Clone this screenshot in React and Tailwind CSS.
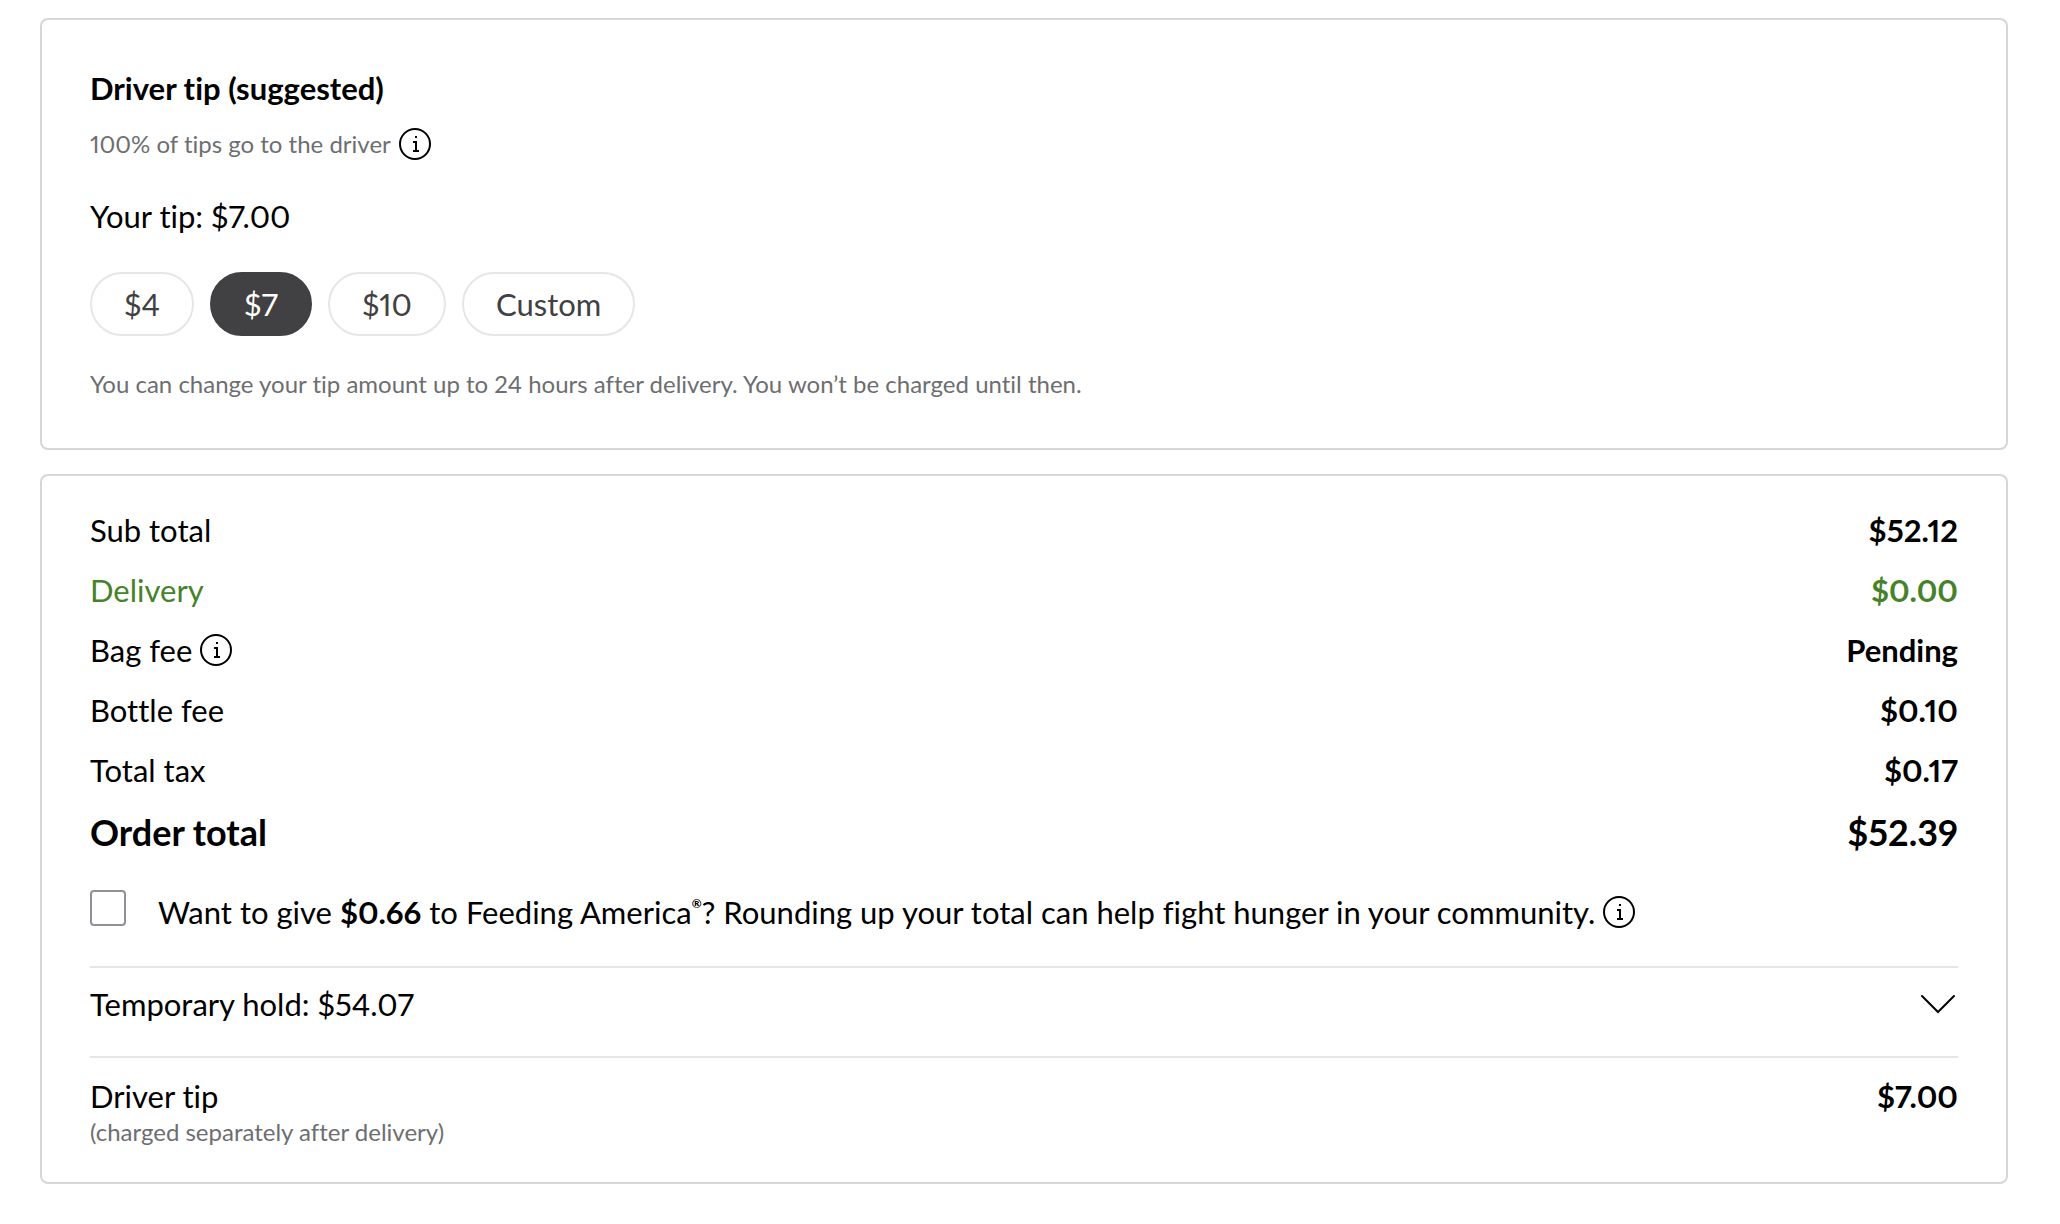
// Checkout summary — driver tip picker on top, order totals below

import { useState } from 'react'

const TIPS = [
  { id: '4', label: '$4', amount: '4.00' },
  { id: '7', label: '$7', amount: '7.00' },
  { id: '10', label: '$10', amount: '10.00' },
]

const ROWS = [
  { label: 'Sub total', value: '$52.12' },
  { label: 'Delivery', value: '$0.00', green: true },
  { label: 'Bag fee', value: 'Pending', info: true },
  { label: 'Bottle fee', value: '$0.10' },
  { label: 'Total tax', value: '$0.17' },
]

function InfoButton({ label }) {
  return (
    <button type="button" aria-label={label} className="size-8 shrink-0">
      <svg viewBox="0 0 32 32" className="size-8" fill="none" stroke="currentColor" strokeWidth="2">
        <circle cx="16" cy="16" r="15" />
        <path d="M14 14h3v9M14 23h6" />
        <path d="M16 9h2" />
      </svg>
    </button>
  )
}

function Card({ className, children }) {
  return (
    <section className={`rounded-lg border-2 border-[#d6d6d7] px-12 ${className}`}>
      {children}
    </section>
  )
}

function TipCard() {
  const [tip, setTip] = useState('7')
  const current = TIPS.find((t) => t.id === tip)

  return (
    <Card className="py-12">
      <h2 className="font-bold">Driver tip (suggested)</h2>
      <div className="mt-5 flex items-center gap-2">
        <p className="text-2xl text-[#6d6e71]">100% of tips go to the driver</p>
        <InfoButton label="About driver tips" />
      </div>
      <p className="mt-9">Your tip: ${current ? current.amount : '0.00'}</p>
      <div className="mt-9 flex gap-4">
        {[...TIPS, { id: 'custom', label: 'Custom' }].map((t) => (
          <button
            key={t.id}
            type="button"
            aria-pressed={t.id === tip}
            onClick={() => setTip(t.id)}
            className={`h-16 rounded-full border-2 px-8 ${
              t.id === tip
                ? 'border-[#414042] bg-[#414042] text-white'
                : 'border-[#e6e6e6] text-[#414042]'
            }`}
          >
            {t.label}
          </button>
        ))}
      </div>
      <p className="mt-8 text-2xl text-[#6d6e71]">
        You can change your tip amount up to 24 hours after delivery. You won’t be charged until then.
      </p>
    </Card>
  )
}

function TotalsCard() {
  const [roundUp, setRoundUp] = useState(false)

  return (
    <Card className="pt-6 pb-[34px]">
      <dl>
        {ROWS.map((row) => (
          <div
            key={row.label}
            className={`flex h-15 items-center justify-between ${row.green ? 'text-[#46822a]' : ''}`}
          >
            <dt className="flex items-center gap-2">
              {row.label}
              {row.info && <InfoButton label="About the bag fee" />}
            </dt>
            <dd className="font-bold">{row.value}</dd>
          </div>
        ))}
        <div className="flex h-16 items-center justify-between text-4xl font-bold">
          <dt>Order total</dt>
          <dd>$52.39</dd>
        </div>
      </dl>

      {/* Round-up donation */}
      <div className="flex items-start pt-[26px] pb-[34px]">
        <input
          id="round-up"
          type="checkbox"
          checked={roundUp}
          onChange={(e) => setRoundUp(e.target.checked)}
          className="size-9 shrink-0 appearance-none rounded border-2 border-[#909196] checked:bg-[#414042]"
        />
        <div className="ml-8 flex items-center gap-2 pt-0.5">
          <label htmlFor="round-up">
            Want to give <b>$0.66</b> to Feeding America
            <sup className="-top-4 text-xs font-bold">®</sup>? Rounding up your total can help fight
            hunger in your community.
          </label>
          <InfoButton label="About Feeding America" />
        </div>
      </div>

      <div className="flex items-start justify-between border-y-2 border-[#e6e6e6] pt-4 pb-8">
        <p>Temporary hold: $54.07</p>
        <button type="button" aria-label="Show temporary hold details" className="mr-0.5">
          <svg viewBox="0 0 36 40" className="h-10 w-9" fill="none" stroke="currentColor" strokeWidth="2" strokeLinecap="round">
            <path d="M2 12l16 16 16-16" />
          </svg>
        </button>
      </div>

      <div className="flex items-start justify-between pt-[18px]">
        <div>
          <p>Driver tip</p>
          <p className="text-2xl text-[#6d6e71]">(charged separately after delivery)</p>
        </div>
        <p className="font-bold">$7.00</p>
      </div>
    </Card>
  )
}

export default function App() {
  return (
    <main className="flex min-h-screen flex-col gap-6 bg-white pt-[18px] pr-[52px] pb-10 pl-10 font-[Lato,sans-serif] text-[31px] leading-10 text-black proportional-nums [font-variant-ligatures:none]">
      <TipCard />
      <TotalsCard />
    </main>
  )
}
